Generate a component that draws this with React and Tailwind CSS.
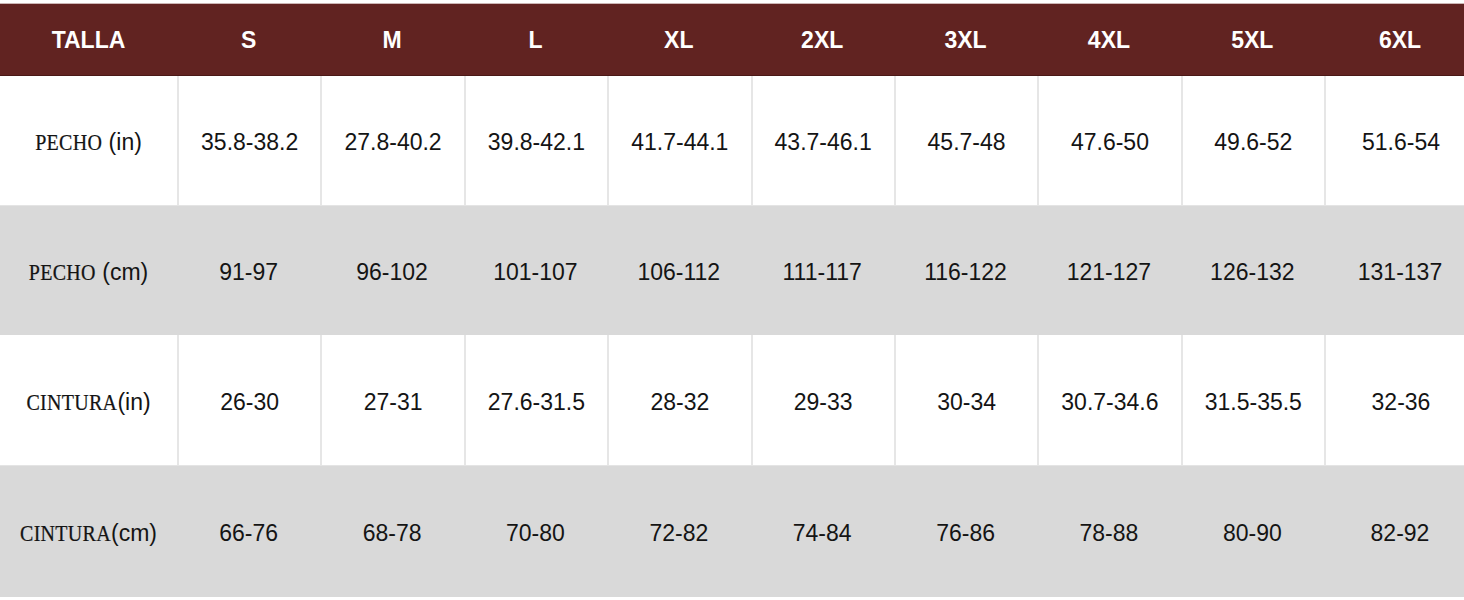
import React from 'react';

const sizes = ['S', 'M', 'L', 'XL', '2XL', '3XL', '4XL', '5XL', '6XL'];

const rows = [
  {
    label: 'PECHO',
    unit: ' (in)',
    bg: 'white',
    values: ['35.8-38.2', '27.8-40.2', '39.8-42.1', '41.7-44.1', '43.7-46.1', '45.7-48', '47.6-50', '49.6-52', '51.6-54'],
  },
  {
    label: 'PECHO',
    unit: ' (cm)',
    bg: 'gray',
    values: ['91-97', '96-102', '101-107', '106-112', '111-117', '116-122', '121-127', '126-132', '131-137'],
  },
  {
    label: 'CINTURA',
    unit: '(in)',
    bg: 'white',
    values: ['26-30', '27-31', '27.6-31.5', '28-32', '29-33', '30-34', '30.7-34.6', '31.5-35.5', '32-36'],
  },
  {
    label: 'CINTURA',
    unit: '(cm)',
    bg: 'gray',
    values: ['66-76', '68-78', '70-80', '72-82', '74-84', '76-86', '78-88', '80-90', '82-92'],
  },
];

const heights = ['h-[129px]', 'h-[130px]', 'h-[130px]', 'h-[132px]'];

const App = () => {
  return (
    <div className="w-[1464px] h-[600px] bg-white overflow-hidden">
      <div className="w-[1476px] mt-[3px] border-t border-[#cdb6b5]">
        {/* Header */}
        <div className="grid grid-cols-[177px_repeat(8,143.375px)_152px] h-[72px] bg-[#612321] border-b border-[#4a1816] pt-[2px] font-['Liberation_Sans',Arial,sans-serif] font-bold text-[23px] text-white">
          <div className="flex items-center justify-center">TALLA</div>
          {sizes.map((s) => (
            <div key={s} className="flex items-center justify-center">
              {s}
            </div>
          ))}
        </div>

        {/* Body */}
        {rows.map((row, i) => (
          <div
            key={i}
            className={`grid grid-cols-[177px_repeat(8,143.375px)_152px] ${heights[i]} ${
              row.bg === 'gray' ? 'bg-[#d9d9d9] border-t border-[#e4e4e4]' : 'bg-white'
            } font-['Liberation_Sans',Arial,sans-serif] text-[23px] text-[#141414]`}
          >
            <div className="flex items-baseline justify-center whitespace-pre pt-[4px] self-center">
              <span className="inline-block font-['Liberation_Serif','Times_New_Roman',serif] text-[20px] tracking-[0.3px] scale-y-[1.15] origin-[50%_78%] [-webkit-text-stroke:0.2px_#141414]">
                {row.label}
              </span>
              <span>{row.unit}</span>
            </div>
            {row.values.map((v, j) => (
              <div
                key={j}
                className={`flex items-center justify-center pt-[4px] ${
                  row.bg === 'white' ? 'border-l-2 border-[#e6e6e6]' : ''
                }`}
              >
                {v}
              </div>
            ))}
          </div>
        ))}
      </div>
    </div>
  );
};

export default App;
